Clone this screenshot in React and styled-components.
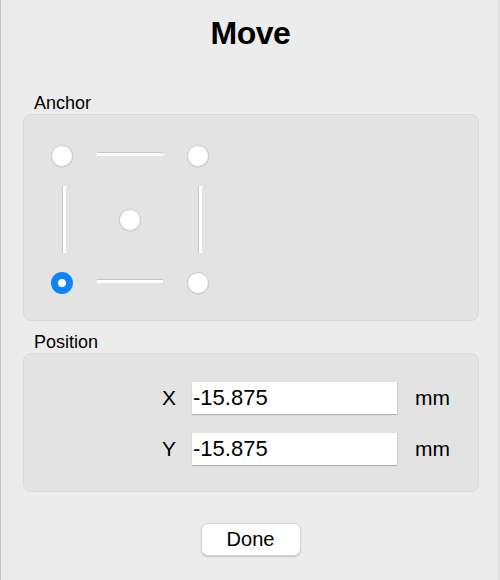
import styled, { createGlobalStyle } from 'styled-components';

const GlobalStyle = createGlobalStyle`
  html, body {
    margin: 0;
    padding: 0;
    background: #ececec;
  }
`;

const Sheet = styled.div`
  box-sizing: border-box;
  width: 500px;
  height: 580px;
  display: flex;
  flex-direction: column;
  padding: 14px 22px 0 22px;
  background: #ececec;
  border-left: 1px solid #c4c4c4;
  box-shadow: inset -3px 0 0 #e2e2e2, inset -2px 0 0 #b4b4b4, inset -1px 0 0 #d4d4d4;
  font-family: "Liberation Sans", Arial, sans-serif;
  color: #000;
`;

const Title = styled.h1`
  margin: 0 0 40px;
  font-size: 32px;
  line-height: 38px;
  font-weight: bold;
  text-align: center;
  letter-spacing: -0.5px;
`;

const GroupLabel = styled.div`
  margin-left: 11px;
  font-size: 18px;
  line-height: 22px;
`;

const Panel = styled.div`
  box-sizing: border-box;
  width: 456px;
  height: ${(p) => p.$height}px;
  padding: ${(p) => p.$padding};
  margin-bottom: ${(p) => p.$gap || 0}px;
  background: #e3e3e3;
  border: 1px solid #d9d9d9;
  border-radius: 8px;
`;

const AnchorGrid = styled.div`
  display: grid;
  grid-template-columns: 22px 66px 22px;
  grid-template-rows: 22px 67px 22px;
  column-gap: 24px;
  row-gap: 19px;
  align-items: center;
  justify-items: center;
`;

const Radio = styled.div`
  box-sizing: border-box;
  width: 22px;
  height: 22px;
  border-radius: 50%;
  background: #fff;
  border: ${(p) => (p.$checked ? '7px solid #0f82fd' : '1px solid #cdcdcd')};
  box-shadow: ${(p) => (p.$checked ? 'none' : '0 0.5px 1px rgba(0,0,0,0.12)')};
`;

const HLine = styled.div`
  box-sizing: border-box;
  width: 66px;
  height: 4px;
  align-self: center;
  margin-top: -4px;
  background: #fff;
  border-top: 1.5px solid #c6c6c6;
`;

const VLine = styled.div`
  box-sizing: border-box;
  width: 4px;
  height: 67px;
  margin-left: 4px;
  background: #fff;
  border-left: 1.5px solid #c6c6c6;
`;

const Rows = styled.div`
  display: flex;
  flex-direction: column;
  gap: 19px;
`;

const Row = styled.div`
  display: flex;
  align-items: center;
  justify-content: flex-end;
`;

const AxisLabel = styled.span`
  margin-right: 16px;
  font-size: 21px;
  line-height: 32px;
`;

const NumberField = styled.input`
  box-sizing: border-box;
  width: 205px;
  height: 32px;
  padding: 0 0 0 1px;
  border: none;
  background: #fff;
  box-shadow: 0 1px 1px rgba(0, 0, 0, 0.22), 1px 0 0 rgba(0, 0, 0, 0.06);
  font-family: "Liberation Sans", Arial, sans-serif;
  font-size: 22px;
  color: #000;
  outline: none;
`;

const Unit = styled.span`
  width: 37px;
  margin-left: 18px;
  font-size: 21px;
  line-height: 32px;
`;

const Footer = styled.div`
  display: flex;
  justify-content: center;
  padding-top: 31px;
`;

const DoneButton = styled.button`
  box-sizing: border-box;
  width: 100px;
  height: 33px;
  border: 1px solid #d2d2d2;
  border-radius: 7px;
  background: #fff;
  box-shadow: 0 1px 1.5px rgba(0, 0, 0, 0.18);
  font-family: "Liberation Sans", Arial, sans-serif;
  font-size: 20px;
  color: #000;
`;

const positions = [
  { axis: 'X', value: '-15.875' },
  { axis: 'Y', value: '-15.875' },
];

export default function App() {
  return (
    <Sheet>
      <GlobalStyle />
      <Title>Move</Title>

      <GroupLabel>Anchor</GroupLabel>
      <Panel $height={207} $padding="30px 0 0 27px" $gap={10}>
        <AnchorGrid>
          <Radio />
          <HLine />
          <Radio />
          <VLine />
          <Radio />
          <VLine />
          <Radio $checked />
          <HLine />
          <Radio />
        </AnchorGrid>
      </Panel>

      <GroupLabel>Position</GroupLabel>
      <Panel $height={139} $padding="28px 26px 0 0">
        <Rows>
          {positions.map((p) => (
            <Row key={p.axis}>
              <AxisLabel>{p.axis}</AxisLabel>
              <NumberField defaultValue={p.value} />
              <Unit>mm</Unit>
            </Row>
          ))}
        </Rows>
      </Panel>

      <Footer>
        <DoneButton>Done</DoneButton>
      </Footer>
    </Sheet>
  );
}
